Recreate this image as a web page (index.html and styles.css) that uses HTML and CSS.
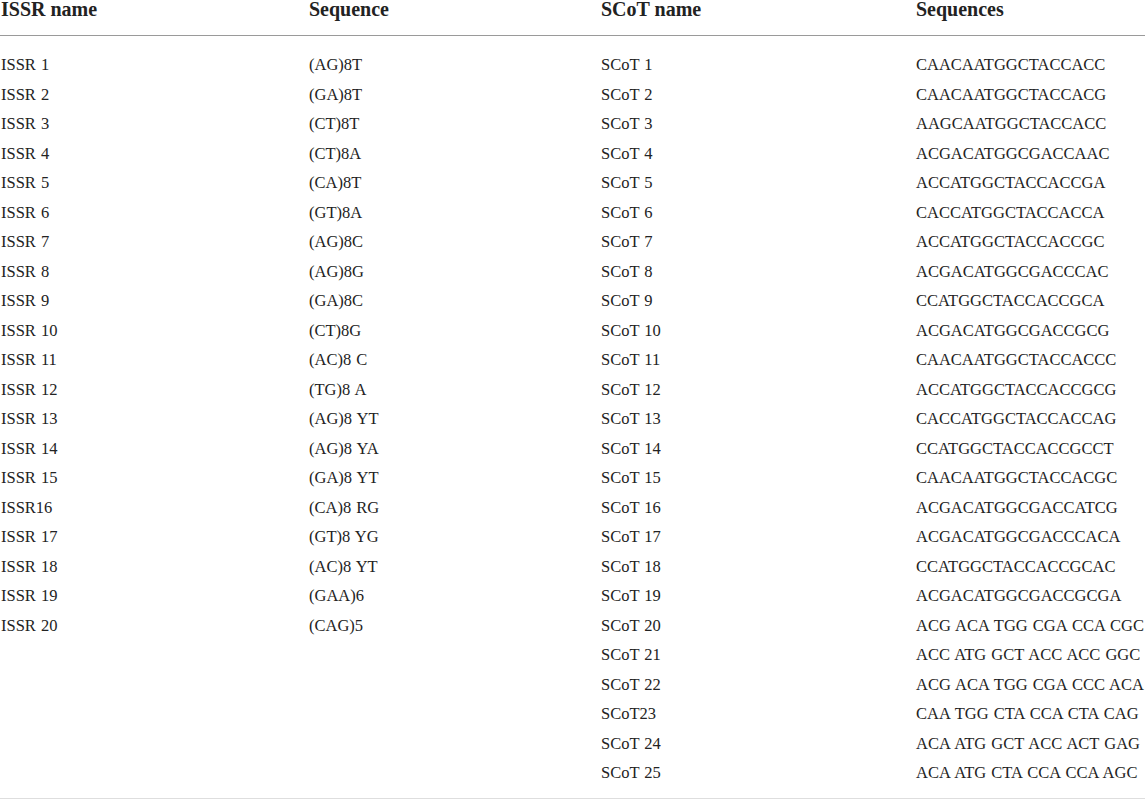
FILE: index.html
```html
<!DOCTYPE html>
<html lang="en">
<head>
<meta charset="utf-8">
<title>ISSR and SCoT primers</title>
<link rel="stylesheet" href="styles.css">
</head>
<body>
<div class="table">
  <div class="row head">
    <div class="cell">ISSR name</div>
    <div class="cell">Sequence</div>
    <div class="cell">SCoT name</div>
    <div class="cell">Sequences</div>
  </div>
  <div class="body">
    <div class="row"><div class="cell">ISSR 1</div><div class="cell">(AG)8T</div><div class="cell">SCoT 1</div><div class="cell">CAACAATGGCTACCACC</div></div>
    <div class="row"><div class="cell">ISSR 2</div><div class="cell">(GA)8T</div><div class="cell">SCoT 2</div><div class="cell">CAACAATGGCTACCACG</div></div>
    <div class="row"><div class="cell">ISSR 3</div><div class="cell">(CT)8T</div><div class="cell">SCoT 3</div><div class="cell">AAGCAATGGCTACCACC</div></div>
    <div class="row"><div class="cell">ISSR 4</div><div class="cell">(CT)8A</div><div class="cell">SCoT 4</div><div class="cell">ACGACATGGCGACCAAC</div></div>
    <div class="row"><div class="cell">ISSR 5</div><div class="cell">(CA)8T</div><div class="cell">SCoT 5</div><div class="cell">ACCATGGCTACCACCGA</div></div>
    <div class="row"><div class="cell">ISSR 6</div><div class="cell">(GT)8A</div><div class="cell">SCoT 6</div><div class="cell">CACCATGGCTACCACCA</div></div>
    <div class="row"><div class="cell">ISSR 7</div><div class="cell">(AG)8C</div><div class="cell">SCoT 7</div><div class="cell">ACCATGGCTACCACCGC</div></div>
    <div class="row"><div class="cell">ISSR 8</div><div class="cell">(AG)8G</div><div class="cell">SCoT 8</div><div class="cell">ACGACATGGCGACCCAC</div></div>
    <div class="row"><div class="cell">ISSR 9</div><div class="cell">(GA)8C</div><div class="cell">SCoT 9</div><div class="cell">CCATGGCTACCACCGCA</div></div>
    <div class="row"><div class="cell">ISSR 10</div><div class="cell">(CT)8G</div><div class="cell">SCoT 10</div><div class="cell">ACGACATGGCGACCGCG</div></div>
    <div class="row"><div class="cell">ISSR 11</div><div class="cell">(AC)8 C</div><div class="cell">SCoT 11</div><div class="cell">CAACAATGGCTACCACCC</div></div>
    <div class="row"><div class="cell">ISSR 12</div><div class="cell">(TG)8 A</div><div class="cell">SCoT 12</div><div class="cell">ACCATGGCTACCACCGCG</div></div>
    <div class="row"><div class="cell">ISSR 13</div><div class="cell">(AG)8 YT</div><div class="cell">SCoT 13</div><div class="cell">CACCATGGCTACCACCAG</div></div>
    <div class="row"><div class="cell">ISSR 14</div><div class="cell">(AG)8 YA</div><div class="cell">SCoT 14</div><div class="cell">CCATGGCTACCACCGCCT</div></div>
    <div class="row"><div class="cell">ISSR 15</div><div class="cell">(GA)8 YT</div><div class="cell">SCoT 15</div><div class="cell">CAACAATGGCTACCACGC</div></div>
    <div class="row"><div class="cell">ISSR16</div><div class="cell">(CA)8 RG</div><div class="cell">SCoT 16</div><div class="cell">ACGACATGGCGACCATCG</div></div>
    <div class="row"><div class="cell">ISSR 17</div><div class="cell">(GT)8 YG</div><div class="cell">SCoT 17</div><div class="cell">ACGACATGGCGACCCACA</div></div>
    <div class="row"><div class="cell">ISSR 18</div><div class="cell">(AC)8 YT</div><div class="cell">SCoT 18</div><div class="cell">CCATGGCTACCACCGCAC</div></div>
    <div class="row"><div class="cell">ISSR 19</div><div class="cell">(GAA)6</div><div class="cell">SCoT 19</div><div class="cell">ACGACATGGCGACCGCGA</div></div>
    <div class="row"><div class="cell">ISSR 20</div><div class="cell">(CAG)5</div><div class="cell">SCoT 20</div><div class="cell">ACG ACA TGG CGA CCA CGC</div></div>
    <div class="row"><div class="cell"></div><div class="cell"></div><div class="cell">SCoT 21</div><div class="cell">ACC ATG GCT ACC ACC GGC</div></div>
    <div class="row"><div class="cell"></div><div class="cell"></div><div class="cell">SCoT 22</div><div class="cell">ACG ACA TGG CGA CCC ACA</div></div>
    <div class="row"><div class="cell"></div><div class="cell"></div><div class="cell">SCoT23</div><div class="cell">CAA TGG CTA CCA CTA CAG</div></div>
    <div class="row"><div class="cell"></div><div class="cell"></div><div class="cell">SCoT 24</div><div class="cell">ACA ATG GCT ACC ACT GAG</div></div>
    <div class="row"><div class="cell"></div><div class="cell"></div><div class="cell">SCoT 25</div><div class="cell">ACA ATG CTA CCA CCA AGC</div></div>
  </div>
</div>
</body>
</html>
```
FILE: styles.css
```css
html, body {
  margin: 0;
  padding: 0;
  background: #ffffff;
}

body {
  font-family: "Liberation Serif", "Times New Roman", serif;
  color: #232323;
  width: 1145px;
  overflow: hidden;
}

.table {
  width: 1145px;
}

.row {
  display: grid;
  grid-template-columns: 308px 292px 315px 230px;
}

.cell {
  padding-left: 1px;
  white-space: nowrap;
}

.head {
  height: 35px;
  border-bottom: 1px solid #9a9a9a;
  font-weight: bold;
  font-size: 20px;
  line-height: 18.5px;
  color: #222222;
}

.body {
  padding: 14px 0 10px;
  border-bottom: 1px solid #dedede;
}

.body .row {
  height: 29.5px;
  font-size: 16.5px;
  line-height: 29.5px;
  word-spacing: 1px;
}
```
